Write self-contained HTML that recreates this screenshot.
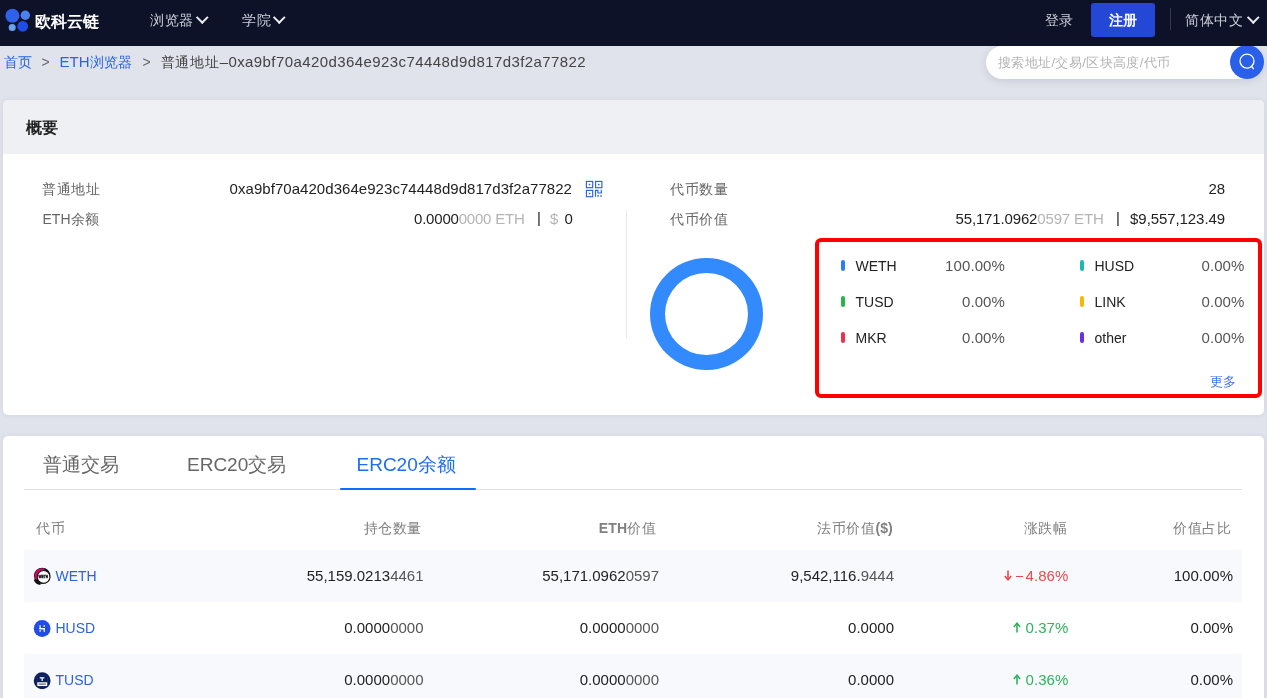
<!DOCTYPE html>
<html><head><meta charset="utf-8">
<style>
*{box-sizing:border-box;margin:0;padding:0}
html,body{width:1267px;height:698px;overflow:hidden}
body{will-change:transform}
body{background:#e0e3eb;font-family:"Liberation Sans",sans-serif;color:#333;position:relative}
.a{position:absolute;white-space:nowrap;line-height:20px}
.r{text-align:right}
.th.r,.lbl.r{margin-right:-0.6px}
.c{font-size:14.25px}
.nav{position:absolute;left:0;top:0;width:1267px;height:46px;background:#0e1229;z-index:5}
.navt{color:#cdd0d8;font-size:14px;letter-spacing:0.5px}
.chev{position:absolute;width:8.5px;height:8.5px;border-right:2.2px solid #eceef2;border-bottom:2.2px solid #eceef2;transform:rotate(45deg)}
.card{position:absolute;left:3px;width:1261px;background:#fff;border-radius:5px;overflow:hidden;box-shadow:0 0 4px rgba(50,70,140,0.10)}
.lbl{color:#666;font-size:14px;letter-spacing:0.6px}
.val{color:#222;font-size:15px}
.gray{color:#b4b4b4}
.blue{color:#2a63e6}
.mk{position:absolute;width:4.2px;height:11px;border-radius:2.1px}
.th{color:#808080;font-size:14px;letter-spacing:0.6px}
.td{color:#222;font-size:15px}
.lt{color:#555}
.lg{font-size:14px;color:#222}
.lp{font-size:15px;color:#555;letter-spacing:0.1px}
.row{position:absolute;left:24px;width:1218px;height:52px;background:#f8f9fd}
</style></head><body>
<div class="nav">
  <svg style="position:absolute;left:4px;top:7px" width="30" height="30" viewBox="0 0 30 30">
    <circle cx="8.4" cy="8.8" r="7" fill="#2f62e8"/>
    <circle cx="21.3" cy="8.2" r="4.7" fill="#4d82ee"/>
    <circle cx="8.2" cy="20.5" r="3.5" fill="#6aa2f2"/>
    <circle cx="18.7" cy="19.3" r="5.4" fill="#1f4ee6"/>
  </svg>
  <div class="a" style="left:35px;top:12px;color:#fff;font-size:16px;font-weight:bold">欧科云链</div>
  <div class="a navt" style="left:150px;top:9.5px">浏览器</div>
  <span class="chev" style="left:198px;top:12.5px"></span>
  <div class="a navt" style="left:242px;top:9.5px">学院</div>
  <span class="chev" style="left:275px;top:12.5px"></span>
  <div class="a navt" style="left:1044.5px;top:10px">登录</div>
  <div class="a" style="left:1091px;top:3px;width:64px;height:34px;background:#2447d6;border-radius:3px"></div>
  <div class="a" style="left:1108.5px;top:10px;color:#fff;font-size:14px;letter-spacing:0.5px;font-weight:600">注册</div>
  <div class="a" style="left:1170px;top:8px;width:1px;height:22px;background:#343850"></div>
  <div class="a navt" style="left:1185px;top:10px">简体中文</div>
  <span class="chev" style="left:1248.5px;top:12.5px"></span>
</div>

<!-- breadcrumb -->
<div class="a blue c" style="left:4px;top:52px">首页</div>
<div class="a" style="left:41.5px;top:52px;font-size:14px;color:#666">&gt;</div>
<div class="a blue" style="left:59.5px;top:52px;font-size:15px">ETH<span class="c">浏览器</span></div>
<div class="a" style="left:142.5px;top:52px;font-size:14px;color:#666">&gt;</div>
<div class="a" style="left:160.5px;top:52px;color:#444"><span style="font-size:14px;letter-spacing:0.8px">普通地址</span><span style="font-size:15px;letter-spacing:0.41px">&ndash;0xa9bf70a420d364e923c74448d9d817d3f2a77822</span></div>

<!-- search -->
<div class="a" style="left:986px;top:46px;width:277px;height:33px;background:#fff;border-radius:17px;box-shadow:0 2px 8px rgba(30,40,80,0.13)"></div>
<div class="a" style="left:998px;top:53px;font-size:13px;color:#b3b3b3;letter-spacing:0.37px">搜索地址/交易/区块高度/代币</div>
<div class="a" style="left:1229.5px;top:45px;width:34px;height:34px;border-radius:50%;background:#2a60e9">
  <svg style="position:absolute;left:0;top:0" width="34" height="34" viewBox="0 0 34 34"><circle cx="17" cy="16.1" r="7" fill="none" stroke="#fff" stroke-width="1.3"/><path d="M21.5 21.3 L23.4 23.6" stroke="#fff" stroke-width="1.4" stroke-linecap="round"/></svg>
</div>

<!-- summary card -->
<div class="card" style="top:100px;height:315px">
  <div style="position:absolute;left:0;top:0;width:1261px;height:54px;background:#eff0f4"></div>
</div>
<div class="a" style="left:26px;top:118px;font-size:16px;font-weight:bold;color:#222">概要</div>

<div class="a lbl" style="left:42px;top:179px">普通地址</div>
<div class="a val r" style="right:695px;top:179px;letter-spacing:0.05px">0xa9bf70a420d364e923c74448d9d817d3f2a77822</div>
<svg style="position:absolute;left:585px;top:180px" width="18" height="18" viewBox="0 0 18 18" fill="none" stroke="#2a61e3" stroke-width="1.15">
  <rect x="1.4" y="1.4" width="6.3" height="6.3"/><rect x="10.6" y="1.4" width="6.3" height="6.3"/><rect x="1.4" y="10.4" width="6.3" height="6.3"/>
  <rect x="3.8" y="3.8" width="1.5" height="1.5" fill="#2a61e3" stroke="none"/><rect x="13" y="3.8" width="1.5" height="1.5" fill="#2a61e3" stroke="none"/><rect x="3.8" y="12.8" width="1.5" height="1.5" fill="#2a61e3" stroke="none"/>
  <path d="M10.5 16.7 V10.35 H12.9 V12.95 H16.3 V9.8"/><rect x="12.3" y="15.2" width="1.6" height="1.5" fill="#2a61e3" stroke="none"/><rect x="15.3" y="15.2" width="1.5" height="1.5" fill="#2a61e3" stroke="none"/>
</svg>
<div class="a lbl" style="left:42.5px;top:209px"><span style="letter-spacing:0">ETH</span>余额</div>
<div class="a val" style="left:414px;top:209px;letter-spacing:-0.2px">0.0000<span class="gray">0000 ETH</span></div>
<div class="a val" style="left:537px;top:208px">|</div>
<div class="a val gray" style="left:550px;top:209px">$</div>
<div class="a val" style="left:564.5px;top:209px">0</div>
<div class="a" style="left:626px;top:210px;width:1px;height:128px;background:#e8e8e8"></div>

<div class="a lbl" style="left:670px;top:179px">代币数量</div>
<div class="a val r" style="right:42px;top:178.7px;letter-spacing:-0.3px;margin-right:0.3px">28</div>
<div class="a lbl" style="left:670px;top:209px">代币价值</div>
<div class="a val" style="left:955.5px;top:209px;letter-spacing:-0.15px">55,171.0962<span class="gray">0597 ETH</span></div>
<div class="a val" style="left:1116px;top:208px">|</div>
<div class="a val r" style="right:42px;top:209px;letter-spacing:-0.08px">$9,557,123.49</div>

<div class="a" style="left:650px;top:258px;width:112.5px;height:112px;border-radius:50%;border:15.5px solid #338afc"></div>

<div class="a" style="left:815px;top:238px;width:447px;height:160px;border:4px solid #ff0000;border-radius:6px"></div>

<div class="mk" style="left:840.5px;top:260px;background:#2b7ef6"></div>
<div class="a lg" style="left:855.5px;top:256px">WETH</div>
<div class="a lp r" style="right:262px;top:256px;">100.00%</div>
<div class="mk" style="left:840.5px;top:296px;background:#2bb24c"></div>
<div class="a lg" style="left:855.5px;top:292px">TUSD</div>
<div class="a lp r" style="right:262px;top:292px;">0.00%</div>
<div class="mk" style="left:840.5px;top:332px;background:#e8334f"></div>
<div class="a lg" style="left:855.5px;top:328px">MKR</div>
<div class="a lp r" style="right:262px;top:328px;">0.00%</div>

<div class="mk" style="left:1080.2px;top:260px;background:#1eb8b0"></div>
<div class="a lg" style="left:1094.5px;top:256px">HUSD</div>
<div class="a lp r" style="right:22.5px;top:256px;">0.00%</div>
<div class="mk" style="left:1080.2px;top:296px;background:#f5b800"></div>
<div class="a lg" style="left:1094.5px;top:292px">LINK</div>
<div class="a lp r" style="right:22.5px;top:292px;">0.00%</div>
<div class="mk" style="left:1080.2px;top:332px;background:#6d2ee0"></div>
<div class="a lg" style="left:1094.5px;top:328px">other</div>
<div class="a lp r" style="right:22.5px;top:328px;">0.00%</div>

<div class="a" style="left:1210px;top:372px;font-size:12.75px;color:#3b74e6">更多</div>

<!-- table card -->
<div class="card" style="top:436px;height:270px"></div>
<div class="a" style="left:42.5px;top:449.5px;line-height:30px;font-size:19px;color:#666">普通交易</div>
<div class="a" style="left:187px;top:449.5px;line-height:30px;font-size:19px;color:#666">ERC20交易</div>
<div class="a" style="left:356.5px;top:449.5px;line-height:30px;font-size:19px;color:#1d6ff2">ERC20余额</div>
<div class="a" style="left:24px;top:489px;width:1218px;height:1px;background:#e2e2e2"></div>
<div class="a" style="left:340px;top:488px;width:136px;height:2px;border-radius:1px;background:#0d6efd"></div>

<div class="a th" style="left:36px;top:518px">代币</div>
<div class="a th r" style="right:845.5px;top:518px">持仓数量</div>
<div class="a th r" style="right:611px;top:518px"><b style="letter-spacing:0.2px">ETH</b>价值</div>
<div class="a th r" style="right:375px;top:518px">法币价值<b style="letter-spacing:0">($)</b></div>
<div class="a th r" style="right:200px;top:518px">涨跌幅</div>
<div class="a th r" style="right:36px;top:518px">价值占比</div>

<div class="row" style="top:550px"></div>
<div class="row" style="top:654px"></div>

<svg style="position:absolute;left:32.5px;top:567px" width="18" height="18" viewBox="0 0 18 18"><defs><clipPath id="cp1"><rect x="0" y="0" width="11.5" height="12.6"/></clipPath></defs><circle cx="9.2" cy="8.9" r="8.2" fill="#111"/><circle cx="9.2" cy="8.9" r="7.6" fill="#e0006a" clip-path="url(#cp1)"/><circle cx="10.6" cy="9.9" r="6.4" fill="#fff" stroke="#111" stroke-width="1.1"/><text x="10.3" y="11.1" font-size="3.9" font-weight="bold" text-anchor="middle" font-family="Liberation Sans" fill="#111" stroke="#111" stroke-width="0.35" textLength="9.6" lengthAdjust="spacingAndGlyphs">WETH</text><path d="M1.6 12.4 Q3 16.6 7.5 17" stroke="#111" stroke-width="1.8" fill="none"/></svg>
<div class="a blue" style="left:55.5px;top:565.5px;font-size:14px">WETH</div>
<div class="a td r" style="right:843.5px;top:565.5px;">55,159.0213<span class="lt">4461</span></div>
<div class="a td r" style="right:608px;top:565.5px;">55,171.0962<span class="lt">0597</span></div>
<div class="a td r" style="right:373px;top:565.5px;">9,542,116.<span class="lt">9444</span></div>
<svg style="position:absolute;left:1003.5px;top:570px" width="8" height="11" viewBox="0 0 8 11"><path d="M4 0.5 V9" stroke="#e84a4a" stroke-width="1.6"/><path d="M0.8 6 L4 9.8 L7.2 6" stroke="#e84a4a" stroke-width="1.6" fill="none" stroke-linejoin="miter"/></svg>
<div class="a" style="left:1015.5px;top:575.6px;width:7.5px;height:1.3px;background:#e84a4a"></div>
<div class="a td r" style="right:198.5px;top:565.5px;letter-spacing:0.1px;color:#e84a4a">4.86%</div>
<div class="a td r" style="right:34px;top:565.5px;">100.00%</div>

<svg style="position:absolute;left:32.5px;top:619px" width="18" height="18" viewBox="0 0 18 18"><circle cx="9.15" cy="9.5" r="8.4" fill="#1f4de6"/><g fill="#fff"><rect x="6.5" y="6.2" width="1.2" height="3.9"/><rect x="6.5" y="11" width="1.2" height="1.8"/><rect x="6.5" y="9" width="5.3" height="1.4"/><rect x="10.6" y="6.2" width="1.2" height="1.7"/><rect x="10.6" y="9" width="1.2" height="3.9"/></g></svg>
<div class="a blue" style="left:55.5px;top:617.5px;font-size:14px">HUSD</div>
<div class="a td r" style="right:843.5px;top:617.5px;">0.0000<span class="lt">0000</span></div>
<div class="a td r" style="right:608px;top:617.5px;">0.0000<span class="lt">0000</span></div>
<div class="a td r" style="right:373px;top:617.5px;">0.0000</div>
<svg style="position:absolute;left:1013px;top:622px" width="8" height="11" viewBox="0 0 8 11"><path d="M4 10.5 V2" stroke="#2fb35c" stroke-width="1.6"/><path d="M0.8 5 L4 1.2 L7.2 5" stroke="#2fb35c" stroke-width="1.6" fill="none"/></svg>
<div class="a td r" style="right:198.5px;top:617.5px;letter-spacing:0.1px;color:#2fb35c">0.37%</div>
<div class="a td r" style="right:34px;top:617.5px;">0.00%</div>

<svg style="position:absolute;left:32.5px;top:671px" width="18" height="18" viewBox="0 0 18 18"><circle cx="9.15" cy="9.7" r="8.4" fill="#0b1d5a"/><rect x="4" y="4.3" width="10.4" height="11" rx="1" fill="none" stroke="#2a3a72" stroke-width="0.6"/><g fill="#fff"><rect x="6.7" y="6.2" width="4.7" height="1.3"/><rect x="8.5" y="7.3" width="1.3" height="2.6"/><rect x="4.3" y="11.3" width="9.9" height="3.6" rx="0.4"/></g><rect x="5.6" y="12.4" width="7.2" height="1.4" fill="#6a7498"/></svg>
<div class="a blue" style="left:55.5px;top:669.5px;font-size:14px">TUSD</div>
<div class="a td r" style="right:843.5px;top:669.5px;">0.0000<span class="lt">0000</span></div>
<div class="a td r" style="right:608px;top:669.5px;">0.0000<span class="lt">0000</span></div>
<div class="a td r" style="right:373px;top:669.5px;">0.0000</div>
<svg style="position:absolute;left:1013px;top:674px" width="8" height="11" viewBox="0 0 8 11"><path d="M4 10.5 V2" stroke="#2fb35c" stroke-width="1.6"/><path d="M0.8 5 L4 1.2 L7.2 5" stroke="#2fb35c" stroke-width="1.6" fill="none"/></svg>
<div class="a td r" style="right:198.5px;top:669.5px;letter-spacing:0.1px;color:#2fb35c">0.36%</div>
<div class="a td r" style="right:34px;top:669.5px;">0.00%</div>
</body></html>
